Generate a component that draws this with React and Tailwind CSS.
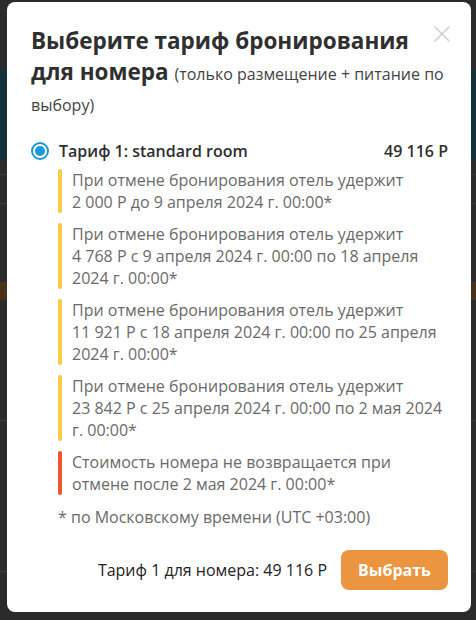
import React from 'react';
import { X } from 'lucide-react';

const policies = [
  { color: 'bg-[#f7cd45]', text: 'При отмене бронирования отель удержит 2\u00a0000\u00a0Р до 9 апреля 2024 г. 00:00*' },
  { color: 'bg-[#f7cd45]', text: 'При отмене бронирования отель удержит 4\u00a0768\u00a0Р с 9 апреля 2024 г. 00:00 по 18 апреля 2024 г. 00:00*' },
  { color: 'bg-[#f7cd45]', text: 'При отмене бронирования отель удержит 11\u00a0921\u00a0Р с 18 апреля 2024 г. 00:00 по 25 апреля 2024 г. 00:00*' },
  { color: 'bg-[#f7cd45]', text: 'При отмене бронирования отель удержит 23\u00a0842\u00a0Р с 25 апреля 2024 г. 00:00 по 2 мая 2024 г. 00:00*' },
  { color: 'bg-[#f0562a]', text: 'Стоимость номера не возвращается при отмене после 2 мая 2024 г. 00:00*' },
];

const App = () => {
  return (
    <div className="relative w-[476px] h-[620px] overflow-hidden bg-[#2b2b2b] font-[family-name:Open_Sans,sans-serif]">
      {/* dimmed page behind the modal */}
      <div className="flex flex-col">
        <div className="h-[70px]" />
        <div className="h-[90px] bg-[#14303a]" />
        <div className="h-[14px]" />
        <div className="h-px bg-[#3a3a3a]" />
        <div className="h-[28px]" />
        <div className="h-px bg-[#3a3a3a]" />
        <div className="h-[78px]" />
        <div className="h-[18px] bg-[#4a3218]" />
        <div className="h-[120px]" />
        <div className="h-px bg-[#3a3a3a]" />
        <div className="h-[150px]" />
        <div className="h-px bg-[#3a3a3a]" />
      </div>

      <div className="absolute left-[7px] top-[2px] w-[464px] h-[610px] bg-white rounded-[8px] pl-6 pr-[23px] pt-[23px]">
        <button className="absolute right-[15px] top-[18px] text-[#d0d0d0]">
          <X className="w-[28px] h-[28px]" strokeWidth={1.3} />
        </button>

        <h2 className="text-[#2f2f2f] text-[22.5px] leading-[31px] font-bold">
          Выберите тариф бронирования для номера{' '}
          <span className="text-[16px] leading-[20px] font-normal text-[#444]">(только размещение + питание по выбору)</span>
        </h2>

        <div className="mt-[22px] h-[22px] flex items-center">
          <span className="w-[18px] h-[18px] rounded-full border-2 border-[#1a9ad6] flex items-center justify-center">
            <span className="w-[10px] h-[10px] rounded-full bg-[#1a9ad6]" />
          </span>
          <span className="ml-[10px] text-[16px] font-semibold text-[#2f2f2f]">Тариф 1: standard room</span>
          <span className="ml-auto text-[16px] font-semibold text-[#2f2f2f]">49&nbsp;116&nbsp;Р</span>
        </div>

        <div className="ml-[27px] mt-[7px] flex flex-col gap-[10px]">
          {policies.map((p, i) => (
            <div key={i} className="flex">
              <span className={`w-[4px] shrink-0 rounded-full ${p.color}`} />
              <p className="pl-[10px] text-[16px] leading-[22px] text-[#6a6a6a]">{p.text}</p>
            </div>
          ))}
        </div>

        <p className="ml-[27px] mt-[11px] text-[16px] leading-[22px] text-[#6a6a6a]">* по Московскому времени (UTC +03:00)</p>

        <div className="mt-[22px] flex items-center justify-end gap-[14px]">
          <span className="text-[16px] font-medium text-[#222]">Тариф 1 для номера: 49&nbsp;116&nbsp;Р</span>
          <button className="h-[40px] w-[107px] rounded-[8px] bg-[#ec9540] text-white text-[16px] font-bold">Выбрать</button>
        </div>
      </div>
    </div>
  );
};

export default App;
